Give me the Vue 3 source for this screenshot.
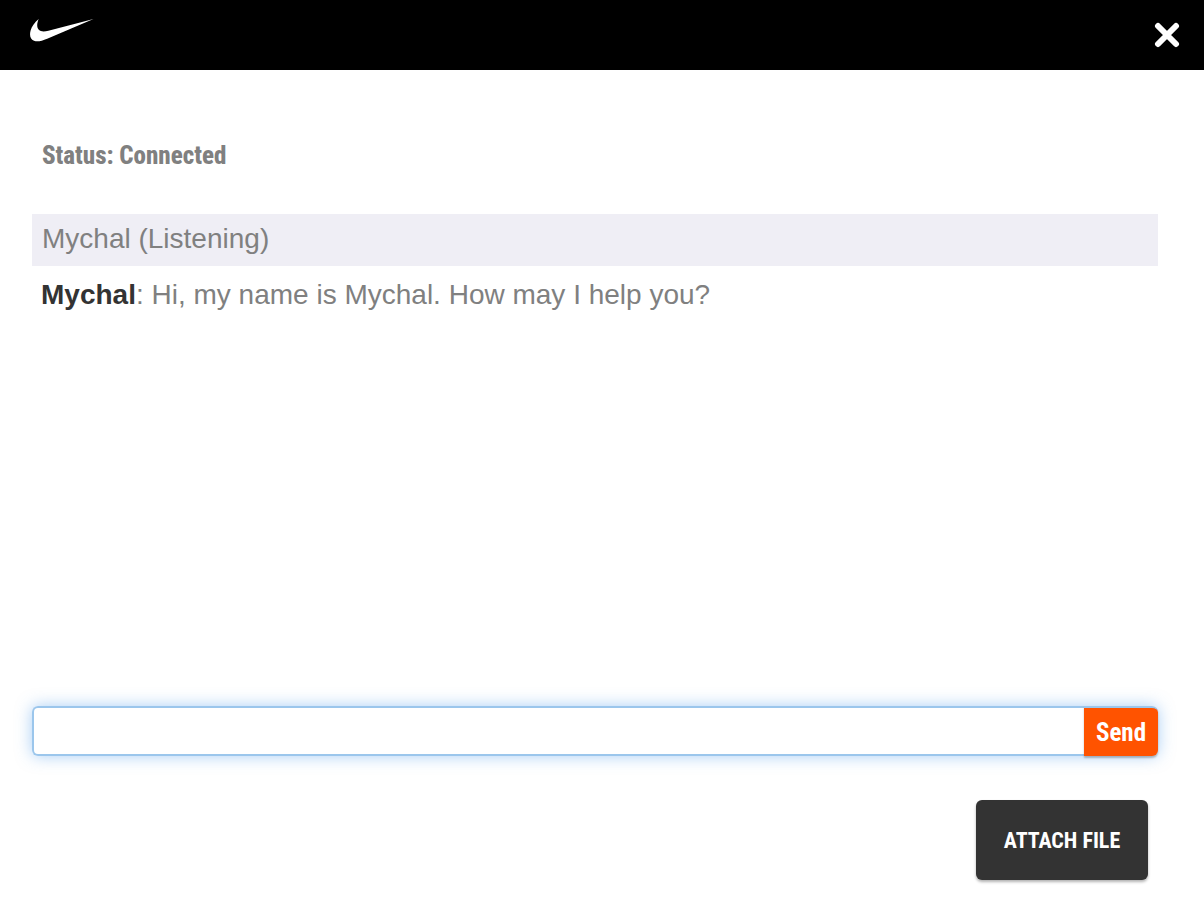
<script setup>
import { ref } from 'vue'

const draft = ref('')
const messages = ref([
  { id: 1, author: 'Mychal', text: 'Hi, my name is Mychal. How may I help you?' },
])

function send() {
  const text = draft.value.trim()
  if (!text) return
  messages.value.push({ id: messages.value.length + 1, author: 'You', text })
  draft.value = ''
}
</script>

<template>
  <div class="chat">
    <header class="topbar">
      <svg class="logo" viewBox="0 0 64 24" role="img" aria-label="Nike">
        <path d="M63.5 1 L17.2 20.8 C11.5 23.2 7.2 24 4 22.8 C0.2 21.2 -0.7 17 0.6 12.4 C1.8 8.6 4.3 4.8 8.7 1 C7 5 6.4 9.2 8.8 11.8 C10.9 14 14.3 13.8 18.4 12.8 Z" />
      </svg>
      <button class="close" type="button" aria-label="Close">
        <svg viewBox="0 0 26 26" aria-hidden="true">
          <path d="M4 4 L22 22 M22 4 L4 22" />
        </svg>
      </button>
    </header>

    <main class="body">
      <h1 class="status">Status: Connected</h1>
      <p class="agent">Mychal (Listening)</p>
      <div class="log" role="log">
        <p v-for="message in messages" :key="message.id" class="message">
          <strong>{{ message.author }}</strong>: {{ message.text }}
        </p>
      </div>

      <form class="composer" @submit.prevent="send">
        <input v-model="draft" class="field" type="text" aria-label="Message" autocomplete="off">
        <button class="send" type="submit">Send</button>
      </form>

      <button class="attach" type="button">ATTACH FILE</button>
    </main>
  </div>
</template>

<style>
body {
  margin: 0;
  background: #fff;
}
</style>

<style scoped>
.chat {
  display: flex;
  flex-direction: column;
  min-height: 100vh;
  color: #808080;
  font-family: "Liberation Sans", Arial, sans-serif;
  font-size: 28px;
  line-height: 32px;
}

.topbar {
  display: flex;
  justify-content: space-between;
  align-items: flex-start;
  box-sizing: border-box;
  height: 70px;
  padding: 18px 20px 0 30px;
  background: #000;
}

.logo {
  width: 64px;
  height: 24px;
  fill: #fff;
}

.close {
  display: flex;
  margin: 0;
  padding: 4px;
  border: 0;
  background: none;
  cursor: pointer;
}

.close svg {
  width: 26px;
  height: 26px;
  fill: none;
  stroke: #fff;
  stroke-width: 6;
  stroke-linecap: round;
}

.body {
  display: flex;
  flex: 1;
  flex-direction: column;
  padding: 70px 46px 28px 32px;
}

.status,
.send,
.attach {
  font-family: "Roboto Condensed", "Arial Narrow", "Liberation Sans", sans-serif;
  font-weight: 700;
}

.status {
  margin: 0 0 42px;
  padding: 0 10px;
  font-size: 25px;
  font-weight: 800;
  line-height: 32px;
}

.agent {
  margin: 0;
  padding: 9px 10px 11px;
  background: #efeef5;
}

.log {
  flex: 1;
  padding: 13px 9px;
}

.message {
  margin: 0;
}

.message strong {
  color: #333;
}

.composer {
  display: flex;
  border-radius: 6px;
  box-shadow: 0 0 16px rgba(82, 158, 236, 0.5);
}

.field {
  flex: 1;
  min-width: 0;
  box-sizing: border-box;
  height: 50px;
  padding: 0 10px;
  border: 2px solid #9bc6ec;
  border-right: 0;
  border-radius: 6px 0 0 6px;
  outline: 0;
  background: #fff;
  color: #333;
  font: inherit;
}

.send {
  width: 74px;
  padding: 0;
  border: 0;
  border-top: 2px solid #9bc6ec;
  border-radius: 0 6px 6px 0;
  background: #ff5300;
  box-shadow: 0 2px 2px rgba(0, 0, 0, 0.25);
  color: #fff;
  font-size: 25px;
  cursor: pointer;
}

.attach {
  align-self: flex-end;
  width: 172px;
  height: 80px;
  margin: 44px 10px 0 0;
  padding: 0;
  border: 0;
  border-radius: 6px;
  background: #333;
  box-shadow: 0 2px 3px rgba(0, 0, 0, 0.3);
  color: #fff;
  font-size: 22px;
  white-space: nowrap;
  cursor: pointer;
}
</style>
